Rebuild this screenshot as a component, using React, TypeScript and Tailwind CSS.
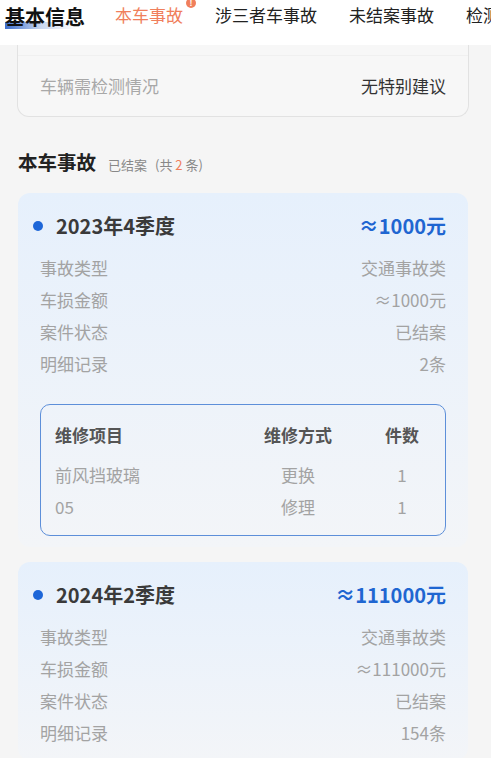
import React from 'react';

interface Accident {
  quarter: string;
  amount: string;
  type: string;
  status: string;
  records: string;
  items?: { name: string; method: string; count: string }[];
}

const accidents: Accident[] = [
  {
    quarter: '2023年4季度',
    amount: '≈1000元',
    type: '交通事故类',
    status: '已结案',
    records: '2条',
    items: [
      { name: '前风挡玻璃', method: '更换', count: '1' },
      { name: '05', method: '修理', count: '1' },
    ],
  },
  {
    quarter: '2024年2季度',
    amount: '≈111000元',
    type: '交通事故类',
    status: '已结案',
    records: '154条',
  },
];

const font = { fontFamily: '"Noto Sans CJK SC", "Noto Sans", sans-serif' };

const Row = ({ label, value }: { label: string; value: string }) => (
  <div className="flex h-[32px] items-center justify-between text-[17px] text-[#a3a3a3]">
    <span>{label}</span>
    <span>{value}</span>
  </div>
);

const AccidentCard = ({ data }: { data: Accident }) => (
  <div className="rounded-[12px] bg-gradient-to-b from-[#e6f0fc] to-[#f3f5f8] px-[22px] pt-[20px] pb-[11px]">
    <div className="flex h-[26px] items-center justify-between">
      <div className="flex items-center">
        <span className="ml-[-7px] mr-[13px] h-[10px] w-[10px] rounded-full bg-[#1d66d8]" />
        <span className="text-[20px] font-bold text-[#3a3a3a]">{data.quarter}</span>
      </div>
      <span className="text-[20px] font-bold text-[#1f66d1]">{data.amount}</span>
    </div>
    <div className="mt-[13px]">
      <Row label="事故类型" value={data.type} />
      <Row label="车损金额" value={data.amount} />
      <Row label="案件状态" value={data.status} />
      <Row label="明细记录" value={data.records} />
    </div>
    {data.items && (
      <div className="mt-[24px] rounded-[10px] border border-[#5d8fd9] px-[14px] pt-[14px] pb-[12px]">
        <div className="grid h-[32px] grid-cols-[1fr_100px_58px] items-center gap-x-[25px] text-[17px] font-bold text-[#555]">
          <span>维修项目</span>
          <span className="text-center">维修方式</span>
          <span className="text-center">件数</span>
        </div>
        <div className="mt-[8px]">
          {data.items.map((it) => (
            <div
              key={it.name}
              className="grid h-[32px] grid-cols-[1fr_100px_58px] items-center gap-x-[25px] text-[17px] text-[#a3a3a3]"
            >
              <span>{it.name}</span>
              <span className="text-center">{it.method}</span>
              <span className="text-center">{it.count}</span>
            </div>
          ))}
        </div>
      </div>
    )}
  </div>
);

export default function App() {
  return (
    <div className="h-[758px] w-[491px] overflow-hidden bg-[#f5f5f5]" style={font}>
      {/* tabs */}
      <div className="flex h-[45px] items-start overflow-hidden whitespace-nowrap bg-white pl-[5px]">
        <div className="relative mt-[3px]">
          <span className="absolute left-0 top-[19px] h-[7px] w-[72px] bg-gradient-to-r from-[#3d6dcc] via-[#c9d7ee] to-transparent" />
          <span className="relative text-[20px] font-bold leading-[28px] text-[#111]">基本信息</span>
        </div>
        <div className="ml-[30px] flex gap-[32px] pt-[2px] text-[17px] leading-[26px] text-[#222]">
          <span className="relative text-[#f07f5c]">
            本车事故
            <span className="absolute right-[-13px] top-[-4px] flex h-[10px] w-[10px] items-center justify-center rounded-full bg-[#f07f5c] text-[8px] font-bold leading-none text-white">
              !
            </span>
          </span>
          <span>涉三者车事故</span>
          <span>未结案事故</span>
          <span>检测记录</span>
        </div>
      </div>

      {/* previous card tail */}
      <div className="ml-[17px] w-[452px] rounded-b-[12px] border-x border-b border-[#e2e2e2] bg-[#f7f7f7] px-[22px]">
        <div className="mx-[-22px] h-[11px] border-b border-[#f0f0f0]" />
        <div className="flex h-[60px] items-center justify-between text-[17px]">
          <span className="text-[#a8a8a8]">车辆需检测情况</span>
          <span className="text-[#333]">无特别建议</span>
        </div>
      </div>

      {/* section */}
      <div className="ml-[18px] mt-[33px] flex items-baseline">
        <span className="text-[19.5px] font-bold leading-[24px] text-[#222]">本车事故</span>
        <span className="ml-[12px] text-[13px] text-[#888]">已结案</span>
        <span className="ml-[8px] text-[13px] text-[#888]">
          (共 <span className="text-[#f07f5c]">2</span> 条)
        </span>
      </div>

      <div className="ml-[18px] mt-[18px] flex w-[450px] flex-col gap-[15px]">
        {accidents.map((a) => (
          <AccidentCard key={a.quarter} data={a} />
        ))}
      </div>
    </div>
  );
}
